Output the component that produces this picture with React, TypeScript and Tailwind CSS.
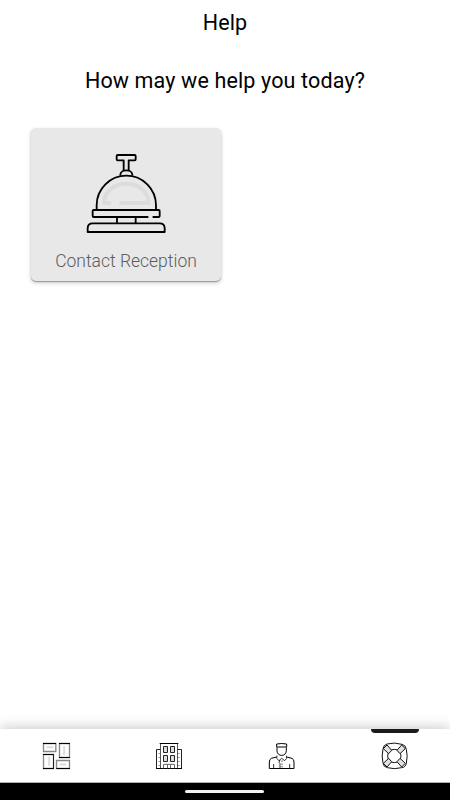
import type { ReactNode } from 'react'

function BellIcon() {
  return (
    <svg className="h-[82px] w-[82px]" viewBox="45 36 246 246" fill="none" stroke="#000" strokeWidth="5.5" strokeLinecap="round" strokeLinejoin="round">
      <path d="M118 189H102C104 112 234 112 236 189H153" stroke="#dcdcdc" strokeWidth="12" />
      <path d="M161 90V61H143q-3 0-3-3V48q0-3 3-3h51q3 0 3 3v10q0 3-3 3H176v29" />
      <path d="M151 104c1-17 35-17 36 0" />
      <path d="M80 209v-13A89 89 0 0 1 258 196v13" />
      <path d="M233 231H71q-3 0-3-3V213q0-3 3-3H266q3 0 3 3v15q0 3-3 3H250" />
      <path d="M141 233v15M197 233v15" />
      <path d="M53 276v-11q0-15 15-15H269q15 0 15 15v11Z" />
    </svg>
  )
}

function DashboardIcon() {
  return (
    <svg className="h-[30px] w-[30px]" viewBox="33 33 90 90" fill="none" stroke="#888" strokeWidth="4">
      <path d="M50 51.500h20M102.500 48v28M57.500 80v28M89 103.500h20" stroke="#ddd" strokeWidth="6" />
      <path d="M40.500 40.500h37v24h-37ZM88.500 40.500h30v42h-30ZM40.500 73.500h30v42h-30ZM79.500 91.500h39v24h-39Z" />
      <path d="M39 40.500h39M87 40.500h33M39 73.500h33M39 115.500h33M79 115.500h41M87 82.500h33" stroke="#000" strokeWidth="3" />
      <path d="M70.500 73v43" stroke="#222" strokeWidth="3" />
    </svg>
  )
}

function HotelIcon() {
  return (
    <svg className="h-[30px] w-[30px]" viewBox="27 33 90 90" fill="none" stroke="#222" strokeWidth="3">
      <path d="M46.500 42v73M97.500 42v73" stroke="#555" />
      <path d="M44 40.500h56M33 115.500h78" stroke="#000" />
      <path d="M46 58.500H34.500v57M98 58.500h11.500v57" />
      <path d="M40 70.500h5M40 82.500h5M40 94.500h5M40 106.500h5M99 70.500h5M99 82.500h5M99 94.500h5M99 106.500h5" stroke="#999" />
      <path d="M55.500 49.500h12v18h-12ZM76.500 49.500h12v18h-12ZM55.500 76.500h12v18h-12ZM76.500 76.500h12v18h-12Z" fill="#ddd" />
      <path d="M55.500 115v-12h33v12M67.500 103v12M76.500 103v12" stroke="#666" />
    </svg>
  )
}

function ConciergeIcon() {
  return (
    <svg className="h-[30px] w-[30px]" viewBox="27 33 90 90" fill="none" stroke="#000" strokeWidth="3" strokeLinejoin="round">
      <path d="M59 42q15-3 30 0v9H59Z" />
      <path d="M60 52v10c0 19 28 19 28 0V52" />
      <path d="M59 81l-16 4q-6 3-6 11v19.500h74V96q0-8-6-11l-16-4" />
      <path d="M60 77l-1 8 7 7 8-7 9 7 6-7-1-8M69 90l-3 7 3 4v14M50 102v13M98 102v13" strokeWidth="2.400" />
      <path d="M75 92v3M75 101v3M75 109v3" />
    </svg>
  )
}

function LifebuoyIcon() {
  return (
    <svg className="h-[30px] w-[30px]" viewBox="57 78 90 90" fill="none" stroke="#111" strokeWidth="3" strokeLinejoin="round">
      <path d="M81 87q22-6 45 1 12 3 13 15 5 21 0 41-2 13-14 14-22 6-43 0-12-2-13-14-5-21 0-42 1-12 12-15Z" />
      <circle cx="103" cy="123" r="20" />
      <path d="M70 101l11-11 14 16-9 10ZM125 90l11 11-16 15-9-10ZM86 130l9 10-14 16-11-11ZM120 130l16 15-11 11-14-16Z" fill="#e2e2e2" />
    </svg>
  )
}

function NavItem({ label, active, children }: { label: string; active?: boolean; children: ReactNode }) {
  return (
    <button aria-label={label} className="relative flex flex-1 items-center justify-center pt-px">
      {active && <span className="absolute top-0 left-1/2 h-1 w-12 -translate-x-[23px] rounded-b-[4px] bg-[#1b1a1e]" />}
      {children}
    </button>
  )
}

export default function App() {
  return (
    <div className="flex h-screen w-full flex-col bg-white font-['Roboto',sans-serif] text-black">
      <header className="flex h-11 items-center justify-center pt-0.5">
        <h1 className="text-[21.5px] leading-none tracking-[0.1px]">Help</h1>
      </header>

      <main className="flex-1">
        <h2 className="mt-6 text-center text-[21.5px] leading-[26px] tracking-[0.15px]">How may we help you today?</h2>
        <button className="mt-[34px] ml-[31px] flex h-[153px] w-[190px] flex-col items-center rounded-[5px] bg-[#e8e8e8] pt-6 shadow-[0_1px_1px_rgba(0,0,0,0.3),0_2px_4px_rgba(0,0,0,0.2)]">
          <BellIcon />
          <span className="mt-4 text-[17.5px] leading-[22px] font-light text-[#5c5c5c]">Contact Reception</span>
        </button>
      </main>

      <nav className="flex h-[53px] bg-white shadow-[0_-2px_12px_rgba(0,0,0,0.2)]">
        <NavItem label="Dashboard">
          <DashboardIcon />
        </NavItem>
        <NavItem label="Hotel">
          <HotelIcon />
        </NavItem>
        <NavItem label="Concierge">
          <ConciergeIcon />
        </NavItem>
        <NavItem label="Help" active>
          <LifebuoyIcon />
        </NavItem>
      </nav>

      {/* System gesture bar */}
      <div className="flex h-[18px] items-center justify-center border-t border-[#b0b0b0] bg-black">
        <div className="mr-px h-[3px] w-[79px] rounded-full bg-[#f2f2f2]" />
      </div>
    </div>
  )
}
